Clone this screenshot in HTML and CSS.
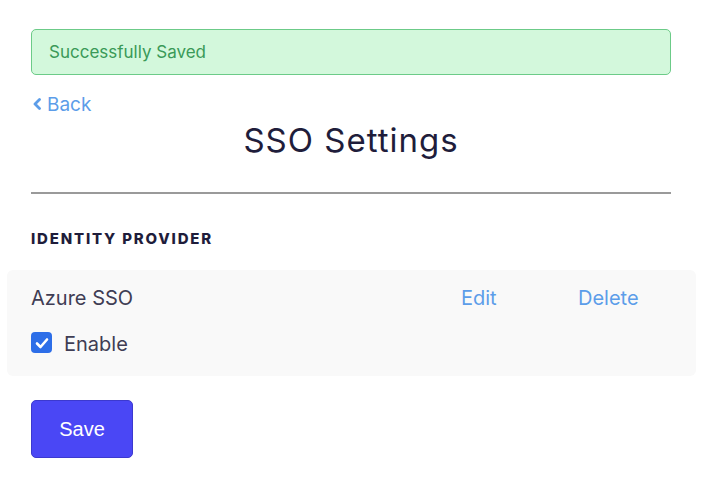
FILE: index.html
```html
<!DOCTYPE html>
<html>
<head>
<meta charset="utf-8">
<link rel="stylesheet" href="styles.css">
</head>
<body>
<main class="page">
  <div class="alert">Successfully Saved</div>
  <a class="back" href="#">
    <svg class="chev" width="10" height="12" viewBox="0 0 10 12"><path d="M7.5 1.5 L3 6 L7.5 10.5" fill="none" stroke="currentColor" stroke-width="2.8" stroke-linecap="round" stroke-linejoin="round"/></svg>
    <span>Back</span>
  </a>
  <h1 class="title">SSO Settings</h1>
  <hr class="rule">
  <h2 class="section">IDENTITY PROVIDER</h2>
  <div class="card">
    <div class="row">
      <span class="name">Azure SSO</span>
      <a class="link edit" href="#">Edit</a>
      <a class="link delete" href="#">Delete</a>
    </div>
    <label class="check">
      <span class="box"><svg width="14" height="12" viewBox="0 0 14 12"><path d="M2 6.5 L5.5 10 L12 2.5" fill="none" stroke="#fff" stroke-width="2.6" stroke-linecap="round" stroke-linejoin="round"/></svg></span>
      <span class="check-label">Enable</span>
    </label>
  </div>
  <button class="save">Save</button>
</main>
</body>
</html>
```
FILE: styles.css
```css
html, body { margin: 0; padding: 0; background: #fff; }
body { font-family: "Inter", "Noto Sans", sans-serif; }
.page {
  width: 640px;
  margin-left: 31px;
  padding-top: 29px;
  display: flex;
  flex-direction: column;
}
.alert {
  box-sizing: border-box;
  height: 46px;
  border: 1px solid #6ccb88;
  background: #d3f8dc;
  border-radius: 5px;
  color: #3a9a58;
  font-size: 17px;
  padding-left: 17px;
  display: flex;
  align-items: center;
}
.back {
  margin-top: 16px;
  display: flex;
  align-items: center;
  gap: 5px;
  color: #5c9de9;
  text-decoration: none;
  font-size: 19px;
  height: 26px;
  align-self: flex-start;
  margin-left: 1px;
}
.chev { display: block; }
.title {
  margin: 3px 0 0;
  text-align: center;
  font-weight: 400;
  font-size: 33px;
  letter-spacing: 1px;
  color: #1f1d3b;
  line-height: 40px;
}
.rule {
  margin: 32px 0 0;
  border: 0;
  border-top: 2px solid #9a9a9a;
  height: 0;
}
.section {
  margin: 36px 0 0;
  font-size: 15px;
  font-weight: 800;
  letter-spacing: 1.8px;
  color: #1f1d3b;
  line-height: 18px;
}
.card {
  margin: 22px -25px 0 -24px;
  background: #f9f9f9;
  border-radius: 6px;
  padding: 15px 24px 0;
  height: 106px;
  box-sizing: border-box;
  color: #3f3d54;
  font-size: 20px;
}
.row { display: flex; align-items: center; height: 26px; }
.name { width: 430px; }
.link { color: #5c9de9; text-decoration: none; }
.edit { width: 117px; }
.check {
  margin-top: 21px;
  display: flex;
  align-items: flex-start;
  gap: 12px;
}
.check-label { line-height: 24px; }
.box {
  width: 21px; height: 21px;
  background: #2d6ee8;
  border-radius: 4px;
  display: flex;
  align-items: center;
  justify-content: center;
}
.save {
  margin-top: 24px;
  align-self: flex-start;
  width: 102px;
  height: 58px;
  background: #4a47f5;
  border: 1px solid #3c39cf;
  border-radius: 5px;
  color: #fff;
  font-family: "Liberation Sans", Arial, sans-serif;
  font-size: 20px;
}
```
